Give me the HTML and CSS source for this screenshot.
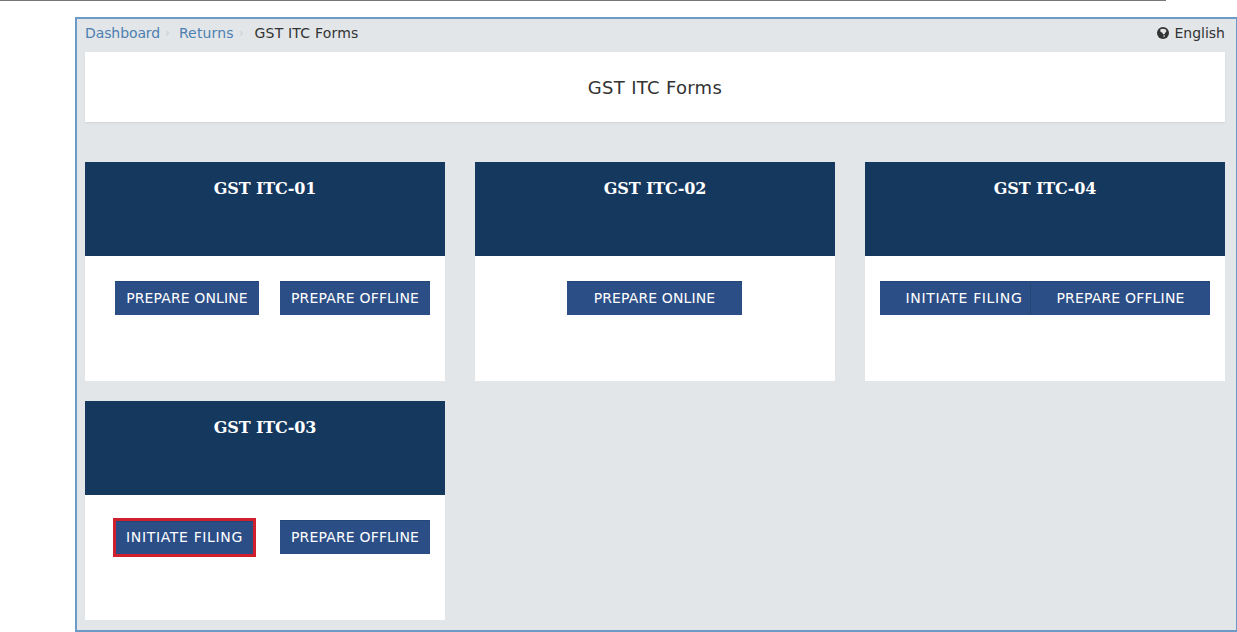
FILE: index.html
```html
<!DOCTYPE html>
<html lang="en">
<head>
<meta charset="utf-8">
<title>GST ITC Forms</title>
<link rel="stylesheet" href="styles.css">
</head>
<body>
<div class="topline"></div>
<main class="frame">
  <div class="crumbbar">
    <nav class="crumbs">
      <a class="crumb" href="#">Dashboard</a><span class="sep">›</span>
      <a class="crumb crumb-returns" href="#">Returns</a><span class="sep sep-last">›</span>
      <span class="current">GST ITC Forms</span>
    </nav>
    <div class="lang">
      <svg class="globe" viewBox="0 0 12 12" width="12" height="12" aria-hidden="true">
        <circle cx="6" cy="6" r="6" fill="#333"/>
        <path d="M3.2 2.6 5.4 1.8 8.4 2.2 9.6 4 8.6 5.2 7.6 7 6.2 7.4 5.2 5.6 3.6 5Z" fill="#e4e6e8"/>
        <path d="M6.4 8.6 8 8.2 7.6 9.8 6.6 10.2Z" fill="#d0d3d6"/>
      </svg>
      <span>English</span>
    </div>
  </div>
  <div class="titlebox">GST ITC Forms</div>
  <div class="cards">
    <section class="card">
      <h2 class="card-head">GST ITC-01</h2>
      <div class="card-body">
        <button class="btn btn-online">PREPARE ONLINE</button>
        <button class="btn btn-offline">PREPARE OFFLINE</button>
      </div>
    </section>
    <section class="card">
      <h2 class="card-head">GST ITC-02</h2>
      <div class="card-body card-body-center">
        <button class="btn btn-wide">PREPARE ONLINE</button>
      </div>
    </section>
    <section class="card">
      <h2 class="card-head">GST ITC-04</h2>
      <div class="card-body card-body-joined">
        <button class="btn btn-j1 btn-filing">INITIATE FILING</button><button class="btn btn-j2 btn-offline-text">PREPARE OFFLINE</button>
      </div>
    </section>
    <section class="card">
      <h2 class="card-head">GST ITC-03</h2>
      <div class="card-body">
        <button class="btn btn-marked btn-filing">INITIATE FILING</button>
        <button class="btn btn-offline">PREPARE OFFLINE</button>
      </div>
    </section>
  </div>
</main>
</body>
</html>
```
FILE: styles.css
```css
* { box-sizing: border-box; }
html, body { margin: 0; padding: 0; }
body {
  width: 1237px;
  height: 632px;
  overflow: hidden;
  background: #fff;
  font-family: "DejaVu Sans", Verdana, sans-serif;
  font-size: 14px;
  color: #333;
}
.topline {
  width: 1166px;
  height: 1px;
  background: #777;
}
.frame {
  margin: 16px 0 0 75px;
  width: 1162px;
  height: 615px;
  background: #e2e6e9;
  border: 2px solid #6d9bc8;
  border-right-width: 1px;
  padding: 0 11px 0 8px;
}
.crumbbar {
  display: flex;
  justify-content: space-between;
  align-items: center;
  height: 33px;
  line-height: 28px;
  padding-bottom: 5px;
}
.crumbs { display: flex; align-items: center; }
.crumb { color: #4d7fb0; text-decoration: none; letter-spacing: -0.1px; }
.crumb-returns { letter-spacing: 0.15px; }
.sep { color: #c9ced2; margin: 0 9px 0 5px; font-size: 12px; }
.sep-last { margin-right: 11px; }
.current { color: #333; letter-spacing: 0.2px; }
.lang { display: flex; align-items: center; gap: 5px; color: #333; }
.titlebox {
  height: 70px;
  background: #fff;
  display: flex;
  align-items: center;
  justify-content: center;
  font-size: 18px;
  letter-spacing: 0.3px;
  color: #333;
  box-shadow: 0 1px 2px rgba(0, 0, 0, 0.08);
}
.cards {
  display: grid;
  grid-template-columns: repeat(3, 360px);
  column-gap: 30px;
  row-gap: 20px;
  margin-top: 40px;
}
.card { height: 219px; background: #fff; }
.card-head {
  margin: 0;
  height: 94px;
  padding-top: 17px;
  background: #15385f;
  color: #fff;
  font-family: "DejaVu Serif", Georgia, serif;
  font-size: 16px;
  font-weight: 700;
  letter-spacing: -0.1px;
  line-height: 20px;
  text-align: center;
}
.card-body {
  display: flex;
  justify-content: flex-end;
  align-items: flex-start;
  gap: 21px;
  padding: 25px 15px 0 0;
}
.card-body-center { justify-content: center; padding-right: 1px; }
.card-body-joined { gap: 0; }
.btn {
  height: 34px;
  padding: 0 0 2px;
  border: 0;
  border-top: 1px solid #24477a;
  background: #2c4e87;
  color: #fff;
  font-family: "DejaVu Sans", Verdana, sans-serif;
  font-size: 14px;
  letter-spacing: 0.12px;
  text-align: center;
}
.btn-online { width: 144px; }
.btn-offline { width: 150px; letter-spacing: 0.17px; }
.btn-offline-text { letter-spacing: 0.17px; }
.btn-wide { width: 175px; }
.btn-filing { letter-spacing: 0.65px; }
.btn-j1 { width: 151px; padding-left: 18px; border-right: 1px solid #264675; }
.btn-j2 { width: 179px; }
.btn-marked {
  width: 137px;
  height: 33px;
  margin-top: 1px;
  margin-right: 6px;
  outline: 3px solid #d0202e;
}
```
